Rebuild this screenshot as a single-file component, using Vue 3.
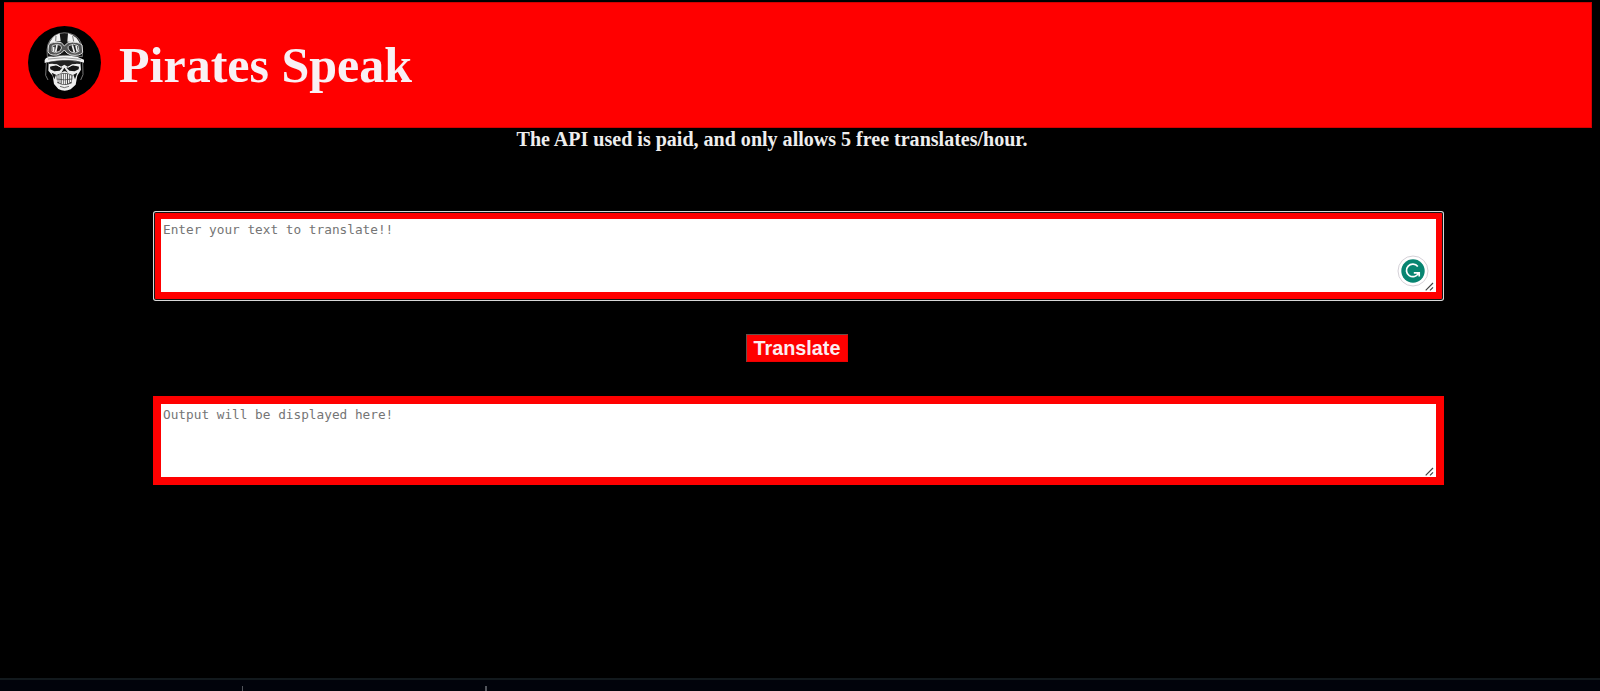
<script setup>
import { ref } from 'vue'

const source = ref('')
const output = ref('')
</script>

<template>
  <div class="page">
    <header class="header">
      <svg class="logo" viewBox="24 20 219 219" aria-label="Skull logo">
        <circle cx="133.5" cy="129.5" r="109.5" fill="#000" />
        <path d="M82 112 Q76 68 103 49 Q132 32 164 48 Q192 65 187 112 Q135 104 82 112Z" fill="#151515" stroke="#aaa" stroke-width="2" />
        <path d="M86 80 Q90 54 119 42 L122 66 Q100 66 86 80Z M144 42 Q172 49 183 80 Q164 66 142 67Z" fill="#f2f2f2" />
        <path d="M108 50 L107 66 M158 50 L161 67" stroke="#777" stroke-width="3" />
        <path d="M86 76 Q96 66 124 70 L133 80 L144 70 Q174 65 186 77 L188 99 Q179 111 153 107 Q139 103 133 92 Q125 104 110 107 Q86 109 84 96Z" fill="#555" stroke="#ddd" stroke-width="3" />
        <path d="M97 79 Q111 72 122 78 Q129 85 119 96 Q105 104 96 96Z M148 78 Q160 71 174 79 L177 96 Q166 105 153 98 Q138 85 148 78Z" fill="#222" stroke="#ccc" stroke-width="3" />
        <path d="M101 82 L101 97 M111 77 L107 98 M157 78 L163 99 M168 79 L172 97" stroke="#f2f2f2" stroke-width="5" />
        <path d="M74 122 Q80 110 100 113 Q136 106 173 113 L192 121 L192 130 Q164 121 134 123 Q105 122 74 131Z" fill="#f2f2f2" />
        <path d="M84 119 Q133 111 183 120" fill="none" stroke="#777" stroke-width="2" />
        <path d="M79 130 L77 168 L84 182 M188 128 L189 166 L182 182" fill="none" stroke="#777" stroke-width="3" />
        <path d="M86 128 Q134 120 181 128 L183 151 L172 169 L167 196 L152 210 Q133 219 115 209 L102 194 L98 169 L85 154Z" fill="#eee" />
        <path d="M86 128 Q134 121 181 128 L181 134 Q160 130 143 142 L133 136 L123 142 Q108 130 86 134Z" fill="#222" />
        <path d="M90 142 L107 138 L127 145 L119 154 L103 156 L91 150Z M177 142 L160 138 L139 145 L148 154 L164 156 L176 150Z M133 145 L124 160 L132 156 L136 156 L144 160Z M95 160 L108 166 L103 180Z M172 160 L160 166 L165 180Z" fill="#151515" />
        <path d="M96 138 L110 136 L124 145 M171 138 L157 136 L143 145" fill="none" stroke="#eee" stroke-width="3" />
        <path d="M109 167 Q133 155 158 167 L155 192 Q134 203 112 191Z" fill="#4a4a4a" />
        <path d="M114 168 V188 M120 165 V192 M127 164 V194 M133 163 V195 M139 164 V194 M146 165 V192 M152 168 V188" stroke="#eee" stroke-width="4" />
        <path d="M110 179 Q133 184 157 179 M120 201 L133 205 L147 201" fill="none" stroke="#333" stroke-width="2" />
      </svg>
      <h1 class="title">Pirates Speak</h1>
    </header>

    <main class="content">
      <p class="notice">The API used is paid, and only allows 5 free translates/hour.</p>
      <div class="field focused">
        <textarea v-model="source" class="box" placeholder="Enter your text to translate!!"></textarea>
        <svg class="assistant" viewBox="0 0 32 32" aria-hidden="true">
          <circle cx="16" cy="16" r="15" fill="#fff" stroke="#d5d1d8" />
          <circle cx="16" cy="16" r="11.7" fill="#078571" />
          <path d="M20.8 11.6 A6.3 6.3 0 1 0 21.5 18 M16.8 17.8 H22.2 V21.5" fill="none" stroke="#fff" stroke-width="1.7" />
        </svg>
        <svg class="grip" viewBox="0 0 9 9" aria-hidden="true"><path d="M.7 8.3 L8 1 M5 8.3 L8 5.3" /></svg>
      </div>
      <button class="translate" type="button">Translate</button>
      <div class="field">
        <textarea v-model="output" class="box" placeholder="Output will be displayed here!"></textarea>
        <svg class="grip" viewBox="0 0 9 9" aria-hidden="true"><path d="M.7 8.3 L8 1 M5 8.3 L8 5.3" /></svg>
      </div>
    </main>

    <footer class="taskbar"><span></span><span></span></footer>
  </div>
</template>

<style>
body {
  margin: 0;
  background: #000;
}
</style>

<style scoped>
.page {
  box-sizing: border-box;
  width: 1600px;
  height: 691px;
  padding-top: 2px;
  display: flex;
  flex-direction: column;
  overflow: hidden;
  background: #000;
  font-family: "Liberation Serif", "Times New Roman", serif;
}
.header {
  box-sizing: border-box;
  flex: none;
  height: 126px;
  margin: 0 8px 0 4px;
  padding: 23px 24px 0;
  display: flex;
  align-items: flex-start;
  gap: 18px;
  background: #f00;
  border: 1px solid #d00000;
  border-left: 0;
}
.logo {
  width: 73px;
  height: 73px;
  flex: none;
}
.title {
  margin: 10px 0 0;
  font-size: 50px;
  line-height: 58px;
  font-weight: 700;
  color: #f9f0f4;
  white-space: nowrap;
}
.content {
  flex: 1;
  display: flex;
  flex-direction: column;
  align-items: center;
}
.notice {
  margin: 0 56px 0 0;
  font-size: 20.05px;
  line-height: 22px;
  font-weight: 700;
  color: #eee;
  white-space: nowrap;
}
.field {
  position: relative;
  box-sizing: border-box;
  width: 1291px;
  height: 89px;
  margin-right: 3px;
  border: 8px solid #f00;
}
.focused {
  width: 1287px;
  height: 86px;
  margin-top: 63px;
  border-width: 6px 6px 7px;
  border-radius: 1px;
  box-shadow: 0 0 0 1px #151515, 0 0 0 2px #d8d8d8;
}
.box {
  display: block;
  box-sizing: border-box;
  width: 100%;
  height: 100%;
  padding: 2px;
  border: 0;
  outline: 0;
  resize: none;
  background: #fff;
  font: 12.75px/17px "DejaVu Sans Mono", monospace;
}
.box::placeholder {
  color: #757575;
  opacity: 1;
}
.grip {
  position: absolute;
  right: 2px;
  bottom: 1px;
  width: 9px;
  height: 9px;
  fill: none;
  stroke: #444;
  stroke-width: 1.2;
}
.assistant {
  position: absolute;
  right: 7px;
  bottom: 5px;
  width: 32px;
  height: 32px;
}
.translate {
  box-sizing: border-box;
  width: 102px;
  height: 28px;
  margin: 35px 6px 34px 0;
  padding: 0;
  border: 1px solid;
  border-color: #66504b #e00 #e00 #66504b;
  background: #f00;
  color: #fbeef2;
  font: 700 19.8px/24px "Liberation Sans", Arial, sans-serif;
}
.taskbar {
  box-sizing: border-box;
  flex: none;
  height: 13px;
  border-top: 2px solid #12191d;
  background: #01030b;
  display: flex;
  align-items: flex-end;
}
.taskbar span {
  box-sizing: border-box;
  width: 243px;
  height: 5px;
  border-right: 1px solid #51545b;
}
.taskbar span + span {
  width: 244px;
  border-right-width: 2px;
}
</style>
